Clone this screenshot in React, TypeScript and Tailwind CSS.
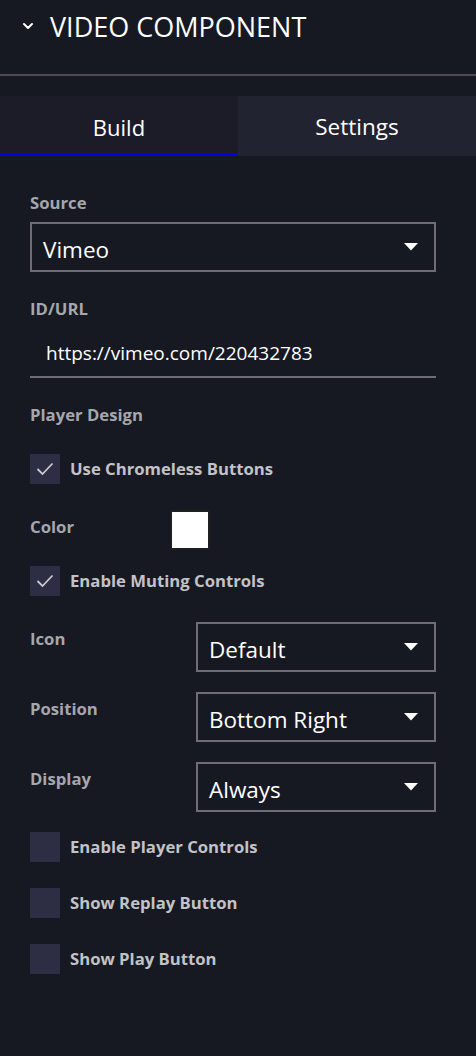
import { ChevronDown } from 'lucide-react';

const font = { fontFamily: '"Open Sans", "Noto Sans", sans-serif' };

function Caret() {
  return (
    <svg width="14" height="8" viewBox="0 0 14 8" className="shrink-0">
      <path d="M0 0 H14 L7 7.5 Z" fill="#ffffff" />
    </svg>
  );
}

function Select({ value, className = '' }: { value: string; className?: string }) {
  return (
    <div
      className={`h-[50px] border-2 border-[#6c6d78] flex items-center justify-between pl-[11px] pr-[16px] ${className}`}
    >
      <span className="text-[22.5px] text-white leading-none pt-[7px]">{value}</span>
      <Caret />
    </div>
  );
}

function Checkbox({ label, checked }: { label: string; checked?: boolean }) {
  return (
    <div className="flex items-center gap-[10px]">
      <div className="w-[30px] h-[30px] bg-[#2d2d44] flex items-center justify-center">
        {checked && (
          <svg width="18" height="14" viewBox="0 0 18 14">
            <path d="M1.5 7 L6.5 12 L16.5 1.5" fill="none" stroke="#c9c9d2" strokeWidth="1.8" />
          </svg>
        )}
      </div>
      <span className="text-[16.7px] font-bold text-[#c2c2c7] leading-[22px]">{label}</span>
    </div>
  );
}

function Label({ children }: { children: string }) {
  return <div className="text-[16.7px] font-bold text-[#a6a6ad] leading-[22px]">{children}</div>;
}

function SelectRow({ label, value, className = '' }: { label: string; value: string; className?: string }) {
  return (
    <div className={`flex ${className}`}>
      <div className="w-[166px] pt-[6px]">
        <Label>{label}</Label>
      </div>
      <Select value={value} className="flex-1" />
    </div>
  );
}

export default function App() {
  return (
    <div className="w-[476px] min-h-[1056px] bg-[#171922]" style={font}>
      <div className="h-[52px] flex items-center pl-[20px] gap-[14px]">
        <ChevronDown className="w-[16px] h-[16px] text-white" strokeWidth={3} />
        <span className="text-[27px] text-white leading-none">VIDEO COMPONENT</span>
      </div>
      <div className="mt-[22px] h-[2px] bg-[#4a4b55]" />

      <div className="mt-[20px] grid grid-cols-2 h-[60px]">
        <div className="bg-[#1b1c27] border-b-2 border-[#0000f0] flex items-center justify-center pt-[4px]">
          <span className="text-[22px] text-white">Build</span>
        </div>
        <div className="bg-[#222330] flex items-center justify-center pt-[2px]">
          <span className="text-[22.5px] text-white">Settings</span>
        </div>
      </div>

      <div className="px-[30px] pt-[36px] pr-[40px]">
        <Label>Source</Label>
        <Select value="Vimeo" className="mt-[8px]" />

        <div className="mt-[26px]">
          <Label>ID/URL</Label>
        </div>
        <div className="mt-[10px] h-[48px] border-b-2 border-[#6c6d78] flex items-center pl-[16px]">
          <span className="text-[19px] text-white">https://vimeo.com/220432783</span>
        </div>

        <div className="mt-[26px]">
          <Label>Player Design</Label>
        </div>
        <div className="mt-[28px]">
          <Checkbox label="Use Chromeless Buttons" checked />
        </div>

        <div className="mt-[26px] flex items-center h-[40px]">
          <div className="w-[140px] -mt-[6px]">
            <Label>Color</Label>
          </div>
          <div className="w-[40px] h-[40px] border-2 border-[#201f21] bg-white" />
        </div>

        <div className="mt-[16px]">
          <Checkbox label="Enable Muting Controls" checked />
        </div>

        <SelectRow label="Icon" value="Default" className="mt-[26px]" />
        <SelectRow label="Position" value="Bottom Right" className="mt-[20px]" />
        <SelectRow label="Display" value="Always" className="mt-[20px]" />

        <div className="mt-[20px] flex flex-col gap-[26px]">
          <Checkbox label="Enable Player Controls" />
          <Checkbox label="Show Replay Button" />
          <Checkbox label="Show Play Button" />
        </div>
      </div>
    </div>
  );
}
